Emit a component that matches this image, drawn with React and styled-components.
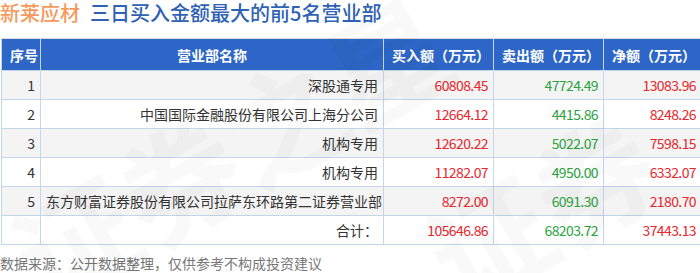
import React from "react";
import styled, { createGlobalStyle } from "styled-components";

const Global = createGlobalStyle`
  html, body { margin: 0; padding: 0; background: #fff; overflow: hidden; }
  body { font-family: "Noto Sans CJK SC", "Noto Sans", sans-serif; }
`;

const Page = styled.div`
  position: relative;
  width: 700px;
  height: 273px;
  overflow: hidden;
`;

const Title = styled.div`
  height: 38px;
  display: flex;
  align-items: flex-start;
  gap: 10px;
  font-size: 20px;
  font-weight: 500;
  line-height: 26px;
  white-space: nowrap;
`;

const TitlePart = styled.span`
  color: ${(p) => p.$color};
`;

const Table = styled.table`
  margin-left: 1px;
  width: 700px;
  border-collapse: collapse;
  table-layout: fixed;
  font-size: 14px;
  color: #333;
`;

const Th = styled.th`
  background: #2d66c6;
  color: #fff;
  font-weight: bold;
  height: 31px;
  padding: 0 8px;
  text-align: ${(p) => p.$align || "left"};
  border: 1px solid #c3d6ec;
  border-top-color: #dcdcdc;
  white-space: nowrap;
  overflow: hidden;
`;

const Tr = styled.tr`
  background: ${(p) => (p.$shade ? "#f4f4f4" : "#fff")};
`;

const Td = styled.td`
  height: 28px;
  padding: 0 5px;
  text-align: right;
  border: 1px solid #c3d6ec;
  white-space: nowrap;
  overflow: hidden;
  color: ${(p) => p.$color || "#333"};
  letter-spacing: ${(p) => (p.$num ? "-0.6px" : "0")};
`;

const Footer = styled.div`
  margin-top: 8px;
  font-size: 14px;
  color: #777;
  white-space: nowrap;
`;

const Watermark = styled.div`
  position: absolute;
  left: ${(p) => p.$x}px;
  top: ${(p) => p.$y}px;
  font-size: 120px;
  font-weight: bold;
  color: rgba(0, 0, 0, 0.025);
  transform: rotate(-30deg);
  white-space: nowrap;
  pointer-events: none;
`;

const RED = "#e8262d";
const GREEN = "#2ba33f";

const rows = [
  ["1", "深股通专用", "60808.45", "47724.49", "13083.96"],
  ["2", "中国国际金融股份有限公司上海分公司", "12664.12", "4415.86", "8248.26"],
  ["3", "机构专用", "12620.22", "5022.07", "7598.15"],
  ["4", "机构专用", "11282.07", "4950.00", "6332.07"],
  ["5", "东方财富证券股份有限公司拉萨东环路第二证券营业部", "8272.00", "6091.30", "2180.70"],
];

export default function App() {
  return (
    <Page>
      <Global />
      <Title>
        <TitlePart $color="#f59a5c">新莱应材</TitlePart>
        <TitlePart $color="#2f62b5">三日买入金额最大的前5名营业部</TitlePart>
      </Title>
      <Table>
        <colgroup>
          <col style={{ width: 39 }} />
          <col style={{ width: 343 }} />
          <col style={{ width: 110 }} />
          <col style={{ width: 110 }} />
          <col style={{ width: 98 }} />
        </colgroup>
        <thead>
          <tr>
            <Th $align="center">序号</Th>
            <Th $align="center">营业部名称</Th>
            <Th>买入额（万元）</Th>
            <Th>卖出额（万元）</Th>
            <Th>净额（万元）</Th>
          </tr>
        </thead>
        <tbody>
          {rows.map((r, i) => (
            <Tr key={r[0]} $shade={i % 2 === 0}>
              <Td>{r[0]}</Td>
              <Td>{r[1]}</Td>
              <Td $num $color={RED}>{r[2]}</Td>
              <Td $num $color={GREEN}>{r[3]}</Td>
              <Td $num $color={RED}>{r[4]}</Td>
            </Tr>
          ))}
          <Tr>
            <Td></Td>
            <Td>合计：</Td>
            <Td $num $color={RED}>105646.86</Td>
            <Td $num $color={GREEN}>68203.72</Td>
            <Td $num $color={RED}>37443.13</Td>
          </Tr>
        </tbody>
      </Table>
      <Footer>数据来源：公开数据整理，仅供参考不构成投资建议</Footer>
      <Watermark $x={-10} $y={60}>证券之星</Watermark>
      <Watermark $x={420} $y={120}>证券</Watermark>
    </Page>
  );
}
